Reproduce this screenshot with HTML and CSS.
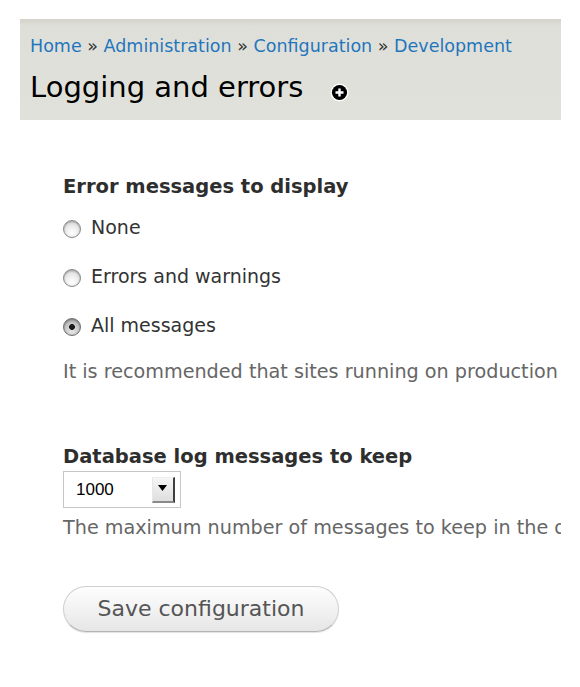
FILE: index.html
```html
<!DOCTYPE html>
<html lang="en">
<head>
<meta charset="utf-8">
<title>Logging and errors</title>
<link rel="stylesheet" href="styles.css">
</head>
<body>
<div class="page">
  <header class="branding">
    <nav class="breadcrumb">
      <a href="#">Home</a> <span class="sep">»</span> <a href="#">Administration</a> <span class="sep">»</span> <a href="#">Configuration</a> <span class="sep">»</span> <a href="#">Development</a>
    </nav>
    <div class="title-row">
      <h1 class="page-title">Logging and errors</h1>
      <span class="shortcut" aria-label="Add to shortcuts">
        <svg width="19" height="19" viewBox="0 0 19 19" aria-hidden="true">
          <circle cx="9.5" cy="9.5" r="9" fill="#fff"/>
          <circle cx="9.5" cy="9.5" r="7.6" fill="#000"/>
          <path d="M9.5 5.5v8M5.5 9.5h8" stroke="#fff" stroke-width="2.4" stroke-linecap="butt"/>
        </svg>
      </span>
    </div>
  </header>

  <form class="content">
    <div class="form-item">
      <div class="label">Error messages to display</div>
      <div class="radios">
        <label class="radio-row"><input type="radio" name="err" class="radio"><span>None</span></label>
        <label class="radio-row"><input type="radio" name="err" class="radio"><span>Errors and warnings</span></label>
        <label class="radio-row"><input type="radio" name="err" class="radio" checked><span>All messages</span></label>
      </div>
      <div class="description desc-first">It is recommended that sites running on production environments do not display any errors.</div>
    </div>

    <div class="form-item item-db">
      <div class="label">Database log messages to keep</div>
      <div class="select">
        <span class="select-value">1000</span>
        <span class="select-btn">
          <svg width="9" height="6" viewBox="0 0 9 6" aria-hidden="true"><path d="M0 0h9L4.5 6z" fill="#000"/></svg>
        </span>
      </div>
      <div class="description desc-second">The maximum number of messages to keep in the database log. Requires a cron maintenance task.</div>
    </div>

    <div class="actions">
      <button type="button" class="button">Save configuration</button>
    </div>
  </form>
</div>
</body>
</html>
```

FILE: styles.css
```css
html, body {
  margin: 0;
  padding: 0;
  background: #fff;
}

body {
  font-family: "DejaVu Sans", "Noto Sans", sans-serif;
  color: #333;
}

.page {
  margin: 19px 0 0 20px;
  width: 541px;
  overflow: hidden;
}

.branding {
  background: linear-gradient(#d3d3cb 0, #dfdfd9 7px, #e1e1db 100%);
  padding: 15px 0 15px 10px;
}

.breadcrumb {
  font-size: 17.5px;
  line-height: 24px;
  height: 24px;
  white-space: nowrap;
  color: #333;
}

.breadcrumb a {
  color: #1f76bd;
  text-decoration: none;
}

.breadcrumb .sep {
  color: #333;
}

.title-row {
  display: flex;
  align-items: center;
  margin-top: 11px;
  height: 36px;
}

.page-title {
  margin: 0;
  font-size: 29px;
  line-height: 36px;
  font-weight: normal;
  color: #000;
  white-space: nowrap;
}

.shortcut {
  display: flex;
  margin-left: 27px;
  margin-top: 10px;
}

.content {
  padding: 55px 0 0 43px;
  margin: 0;
}

.label {
  font-size: 19.5px;
  font-weight: bold;
  line-height: 24px;
  color: #2e2e2e;
  white-space: nowrap;
}

.radios {
  display: flex;
  flex-direction: column;
  gap: 25px;
  margin-top: 16px;
}

.radio-row {
  display: flex;
  align-items: center;
  height: 24px;
  font-size: 19px;
  line-height: 24px;
  color: #333;
  white-space: nowrap;
}

.radio {
  appearance: none;
  -webkit-appearance: none;
  width: 18px;
  height: 18px;
  margin: 3px 10px 0 0;
  border-radius: 50%;
  border: 1px solid #8a8a8a;
  background: radial-gradient(circle at 50% 75%, #ffffff 0, #efefef 40%, #d2d2d2 100%);
  box-shadow: inset 0 1px 2px rgba(0, 0, 0, 0.3), 0 1px 0 rgba(255, 255, 255, 0.6);
  flex: none;
}

.radio:checked {
  border-color: #6c6c6c;
  background:
    radial-gradient(circle at 50% 50%, #1a1a1a 0, #1a1a1a 2.6px, transparent 3.2px),
    radial-gradient(circle at 50% 75%, #e6e6e6 0, #c4c4c4 55%, #9a9a9a 100%);
}

.description {
  font-size: 19.2px;
  line-height: 24px;
  color: #666;
  white-space: nowrap;
}

.desc-first {
  margin-top: 23px;
}

.item-db {
  margin-top: 61px;
}

.select {
  display: flex;
  align-items: center;
  justify-content: space-between;
  box-sizing: border-box;
  width: 118px;
  height: 37px;
  margin-top: 2px;
  border: 1px solid #c6c6c6;
  background: #fff;
  padding: 0 5px 0 12px;
}

.select-value {
  font-family: "Liberation Sans", Arial, sans-serif;
  font-size: 17px;
  color: #000;
  line-height: 20px;
}

.select-btn {
  box-sizing: border-box;
  width: 23px;
  height: 26px;
  margin-top: 1px;
  display: flex;
  align-items: center;
  justify-content: center;
  padding-bottom: 4px;
  padding-right: 2px;
  background: linear-gradient(#f6f6f6, #dedede);
  border-top: 1px solid #eeeeee;
  border-left: 1px solid #e6e6e6;
  border-right: 2px solid #3e3e3e;
  border-bottom: 2px solid #8a8a8a;
}

.desc-second {
  margin-top: 8px;
}

.actions {
  margin-top: 46px;
  padding-bottom: 40px;
}

.button {
  box-sizing: border-box;
  height: 46px;
  width: 276px;
  padding: 0;
  border: 1px solid #cfcfcf;
  border-bottom-color: #b3b3b3;
  border-radius: 23px;
  background: linear-gradient(#fdfdfd 0, #f1f1f1 55%, #e6e6e6 100%);
  box-shadow: 0 1px 1px rgba(0, 0, 0, 0.12);
  font-family: "DejaVu Sans", "Noto Sans", sans-serif;
  font-size: 22px;
  line-height: 44px;
  color: #555;
  cursor: pointer;
}
```
